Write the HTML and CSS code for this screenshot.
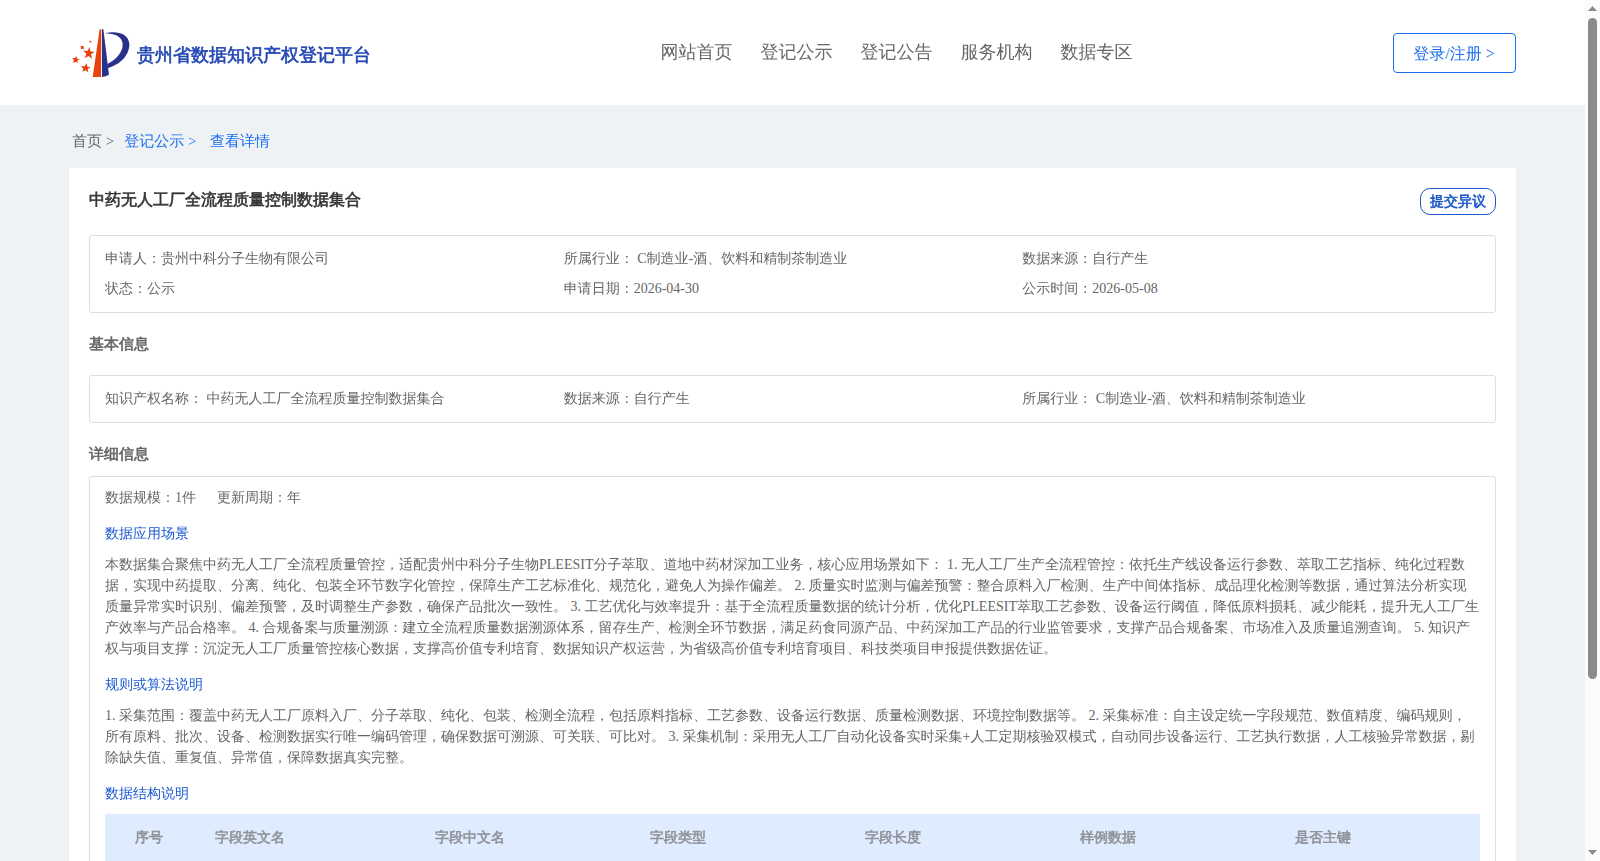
FILE: index.html
```html
<!DOCTYPE html>
<html lang="zh-CN">
<head>
    <meta charset="UTF-8">
    <meta name="viewport" content="width=device-width, initial-scale=1.0">
    <title>贵州省数据知识产权登记平台</title>
    <link rel="stylesheet" href="styles.css">
</head>
<body>
    <div class="page">
        <header class="header">
            <div class="logo">
                <svg class="logoIcon" viewBox="0 0 174 150" width="58" height="50">
                    <g fill="#e8430f">
                        <path d="M83 4h5l-1 143H62z"/>
                        <path d="M53 57l2 13 13 2-11 7 3 14-10-9-12 6 5-13-9-9 13 0z"/>
                        <path d="M13 84l2 8 8 1-7 5 1 8-6-5-8 4 3-9-5-6 8 0z"/>
                        <path d="M44 106l2 10 10 2-9 5 2 10-9-6-9 4 3-9-7-8 11 1z"/>
                        <path d="M29 53l4 2 3-1-1 5 1 4-5-1-4 2 0-5-2-4 4 0z"/>
                        <path d="M54 37l2 2 3 0-2 2 1 3-3-1-3 1 1-3-2-2 3 0z"/>
                    </g>
                    <g fill="#2a318a">
                        <path d="M90 4l4 0 17 136q-9 6-21 7z"/>
                        <path d="M98 16C133 7 170 16 172 48C173 84 140 112 107 120L106 108C132 96 153 72 152 49C151 26 128 16 98 16z"/>
                    </g>
                </svg>
                <span class="logoText">贵州省数据知识产权登记平台</span>
            </div>
            <nav class="nav">
                <a>网站首页</a>
                <a>登记公示</a>
                <a>登记公告</a>
                <a>服务机构</a>
                <a>数据专区</a>
            </nav>
            <div class="login">登录/注册 &gt;</div>
        </header>
        <main class="main">
            <div class="crumbs">
                <span>首页 &gt;</span>
                <span class="crumbLink">登记公示 &gt;</span>
                <span class="crumbLink crumbLast">查看详情</span>
            </div>
            <div class="card">
                <div class="cardTop">
                    <h1 class="title">中药无人工厂全流程质量控制数据集合</h1>
                    <div class="objection">提交异议</div>
                </div>
                <div class="box info">
                    <div>申请人：贵州中科分子生物有限公司</div>
                    <div>所属行业： C制造业-酒、饮料和精制茶制造业</div>
                    <div>数据来源：自行产生</div>
                    <div>状态：公示</div>
                    <div>申请日期：2026-04-30</div>
                    <div>公示时间：2026-05-08</div>
                </div>
                <h2 class="section">基本信息</h2>
                <div class="box info">
                    <div>知识产权名称： 中药无人工厂全流程质量控制数据集合</div>
                    <div>数据来源：自行产生</div>
                    <div>所属行业： C制造业-酒、饮料和精制茶制造业</div>
                </div>
                <h2 class="section sectionDetail">详细信息</h2>
                <div class="box detail">
                    <div class="scale">
                        <span>数据规模：1件</span>
                        <span>更新周期：年</span>
                    </div>
                    <h3 class="subTitle">数据应用场景</h3>
                    <p class="text">本数据集合聚焦中药无人工厂全流程质量管控，适配贵州中科分子生物PLEESIT分子萃取、道地中药材深加工业务，核心应用场景如下： 1. 无人工厂生产全流程管控：依托生产线设备运行参数、萃取工艺指标、纯化过程数据，实现中药提取、分离、纯化、包装全环节数字化管控，保障生产工艺标准化、规范化，避免人为操作偏差。 2. 质量实时监测与偏差预警：整合原料入厂检测、生产中间体指标、成品理化检测等数据，通过算法分析实现质量异常实时识别、偏差预警，及时调整生产参数，确保产品批次一致性。 3. 工艺优化与效率提升：基于全流程质量数据的统计分析，优化PLEESIT萃取工艺参数、设备运行阈值，降低原料损耗、减少能耗，提升无人工厂生产效率与产品合格率。 4. 合规备案与质量溯源：建立全流程质量数据溯源体系，留存生产、检测全环节数据，满足药食同源产品、中药深加工产品的行业监管要求，支撑产品合规备案、市场准入及质量追溯查询。 5. 知识产权与项目支撑：沉淀无人工厂质量管控核心数据，支撑高价值专利培育、数据知识产权运营，为省级高价值专利培育项目、科技类项目申报提供数据佐证。</p>
                    <h3 class="subTitle">规则或算法说明</h3>
                    <p class="text">1. 采集范围：覆盖中药无人工厂原料入厂、分子萃取、纯化、包装、检测全流程，包括原料指标、工艺参数、设备运行数据、质量检测数据、环境控制数据等。 2. 采集标准：自主设定统一字段规范、数值精度、编码规则，所有原料、批次、设备、检测数据实行唯一编码管理，确保数据可溯源、可关联、可比对。 3. 采集机制：采用无人工厂自动化设备实时采集+人工定期核验双模式，自动同步设备运行、工艺执行数据，人工核验异常数据，剔除缺失值、重复值、异常值，保障数据真实完整。</p>
                    <h3 class="subTitle">数据结构说明</h3>
                    <div class="tableHead">
                        <div>序号</div>
                        <div>字段英文名</div>
                        <div>字段中文名</div>
                        <div>字段类型</div>
                        <div>字段长度</div>
                        <div>样例数据</div>
                        <div>是否主键</div>
                    </div>
                </div>
            </div>
        </main>
    </div>
    <div class="scrollbar">
        <svg width="9" height="5" viewBox="0 0 9 5"><path d="M0 5L4.500 0L9 5z" fill="#8b8b8b"/></svg>
        <div class="thumb"></div>
        <svg width="9" height="5" viewBox="0 0 9 5"><path d="M0 0h9L4.500 5z" fill="#8b8b8b"/></svg>
    </div>
</body>
</html>
```
FILE: styles.css
```css
html, body {
    margin: 0;
    padding: 0;
    height: 861px;
    overflow: hidden;
}
body {
    display: flex;
    font-family: "Liberation Serif", "Droid Sans Fallback", "WenQuanYi Zen Hei", "Noto Sans CJK SC", serif;
    font-size: 14px;
    color: #666;
}
h1, h2, h3, p {
    margin: 0;
}
/* the CJK face has no bold cut, thicken it with a stroke */
.logoText, .title, .section, .objection, .tableHead {
    font-weight: normal;
    -webkit-text-stroke: 0.6px;
}
.page {
    flex: 1;
    height: 861px;
    overflow: hidden;
    background-color: #eef2f5;
}
.header {
    display: grid;
    grid-template-columns: 588.5px 1fr auto;
    height: 105px;
    padding: 0 69px 0 72px;
    background-color: #fff;
}
.logo {
    display: flex;
    align-items: flex-start;
    padding-top: 28px;
}
.logoIcon {
    margin-right: 7px;
}
.logoText {
    font-size: 18px;
    line-height: 26px;
    margin-top: 14px;
    color: #2346b4;
}
.nav {
    display: flex;
    gap: 28px;
    padding-top: 39px;
    font-size: 18px;
    line-height: 26px;
}
.login {
    box-sizing: border-box;
    width: 123px;
    height: 40px;
    margin-top: 33px;
    border: 1px solid #1a6ff0;
    border-radius: 4px;
    padding-right: 1px;
    font-size: 16px;
    line-height: 40px;
    text-align: center;
    color: #1a6ff0;
}
.main {
    padding: 0 69px;
}
.crumbs {
    display: flex;
    height: 63px;
    padding-left: 3px;
    box-sizing: border-box;
    padding-top: 26px;
    font-size: 15px;
    line-height: 20px;
}
.crumbLink {
    margin-left: 10px;
    color: #1a6ff0;
}
.crumbLast {
    margin-left: 13.5px;
}
.card {
    height: 800px;
    padding: 20px 20px 0;
    background-color: #fff;
}
.cardTop {
    display: flex;
    justify-content: space-between;
    height: 47px;
}
.title {
    font-size: 16px;
    line-height: 24px;
    color: #333;
}
.objection {
    box-sizing: border-box;
    width: 76px;
    height: 27px;
    border: 1px solid #1a58c8;
    border-radius: 10px;
    line-height: 26px;
    text-align: center;
    color: #1a58c8;
}
.box {
    border: 1px solid #dcdfe0;
    border-radius: 3px;
    padding: 0 15px;
}
.info {
    display: grid;
    grid-template-columns: repeat(3, 1fr);
    padding-top: 8px;
    padding-right: 14px;
    padding-bottom: 8px;
    line-height: 30px;
}
.section {
    height: 62px;
    font-size: 15px;
    line-height: 63px;
}
.sectionDetail {
    height: 53px;
}
.detail {
    height: 500px;
    padding-top: 10px;
}
.scale {
    display: flex;
    gap: 21px;
    line-height: 21px;
}
.subTitle {
    margin-top: 15px;
    font-size: 14px;
    font-weight: normal;
    line-height: 21px;
    color: #1a58d0;
}
.text {
    margin-top: 10px;
    line-height: 21px;
}
.tableHead {
    display: grid;
    grid-template-columns: 80px 220px 215px 215px 215px 215px 1fr;
    margin-top: 10px;
    padding-left: 30px;
    background-color: #dfebfe;
    line-height: 48px;
    color: #909399;
}
.scrollbar {
    display: flex;
    flex-direction: column;
    align-items: center;
    box-sizing: border-box;
    width: 15px;
    padding: 6px 0;
    background-color: #fcfcfc;
}
.thumb {
    width: 9px;
    height: 661px;
    margin: 7px 0 auto;
    border-radius: 5px;
    background-color: #8b8b8b;
}
```
